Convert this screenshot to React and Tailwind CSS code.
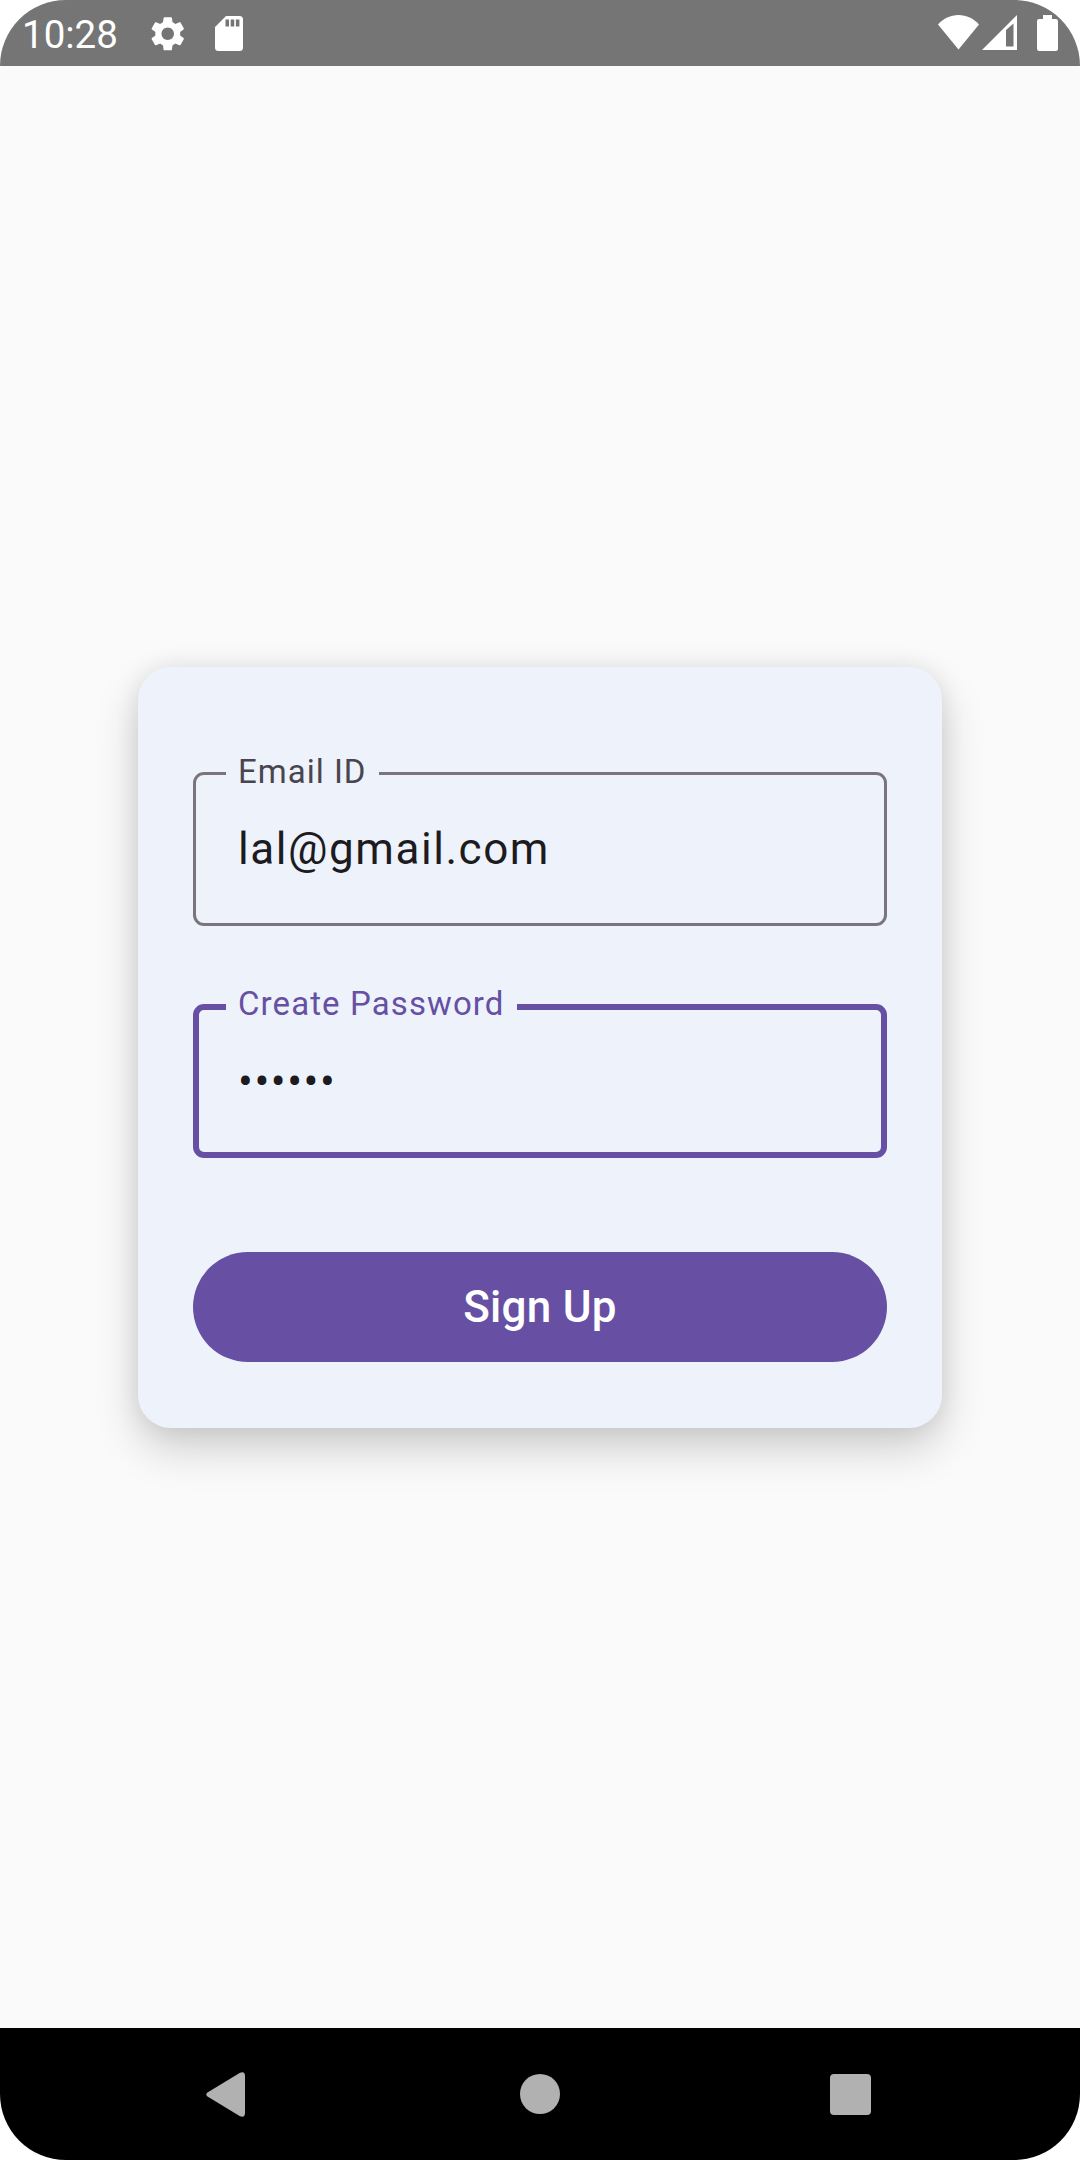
function StatusBar() {
  return (
    <header className="flex h-[66px] items-start justify-between bg-[#757575] text-white">
      <div className="flex items-start">
        <span className="ml-[22px] mt-[12px] w-[98px] whitespace-nowrap text-[38.500px] leading-[46px]">10:28</span>
        <svg className="ml-[27px] mt-[12.500px] size-[41.500px]" viewBox="0 0 24 24" fill="currentColor">
          <path d="M19.14 12.94c.04-.3.06-.61.06-.94 0-.32-.02-.64-.07-.94l2.03-1.58c.18-.14.23-.41.12-.61l-1.92-3.32c-.12-.22-.37-.29-.59-.22l-2.39.96c-.5-.38-1.03-.7-1.62-.94l-.36-2.54c-.04-.24-.24-.41-.48-.41h-3.84c-.24 0-.43.17-.47.41l-.36 2.54c-.59.24-1.13.57-1.62.94l-2.39-.96c-.22-.08-.47 0-.59.22L2.74 8.87c-.12.21-.08.47.12.61l2.03 1.58c-.05.3-.09.63-.09.94s.02.64.07.94l-2.03 1.58c-.18.14-.23.41-.12.61l1.92 3.32c.12.22.37.29.59.22l2.39-.96c.5.38 1.03.7 1.62.94l.36 2.54c.05.24.24.41.48.41h3.84c.24 0 .44-.17.47-.41l.36-2.54c.59-.24 1.13-.56 1.62-.94l2.39.96c.22.08.47 0 .59-.22l1.92-3.32c.12-.22.07-.47-.12-.61l-2.01-1.58zM12 15.6c-1.98 0-3.6-1.62-3.6-3.6s1.62-3.6 3.6-3.6 3.6 1.62 3.6 3.6-1.62 3.6-3.6 3.6z" />
        </svg>
        <svg className="ml-[26.500px] mt-[16px] h-[35px] w-[28px]" viewBox="0 0 28 35" fill="currentColor">
          <path fillRule="evenodd" d="M11 0H24.500A3.500 3.500 0 0 1 28 3.500V31.500A3.500 3.500 0 0 1 24.500 35H3.500A3.500 3.500 0 0 1 0 31.500V11ZM10.500 3.500V10.500H14V3.500ZM15.700 3.500V10.500H19.200V3.500ZM20.900 3.500V10.500H24.400V3.500Z" />
        </svg>
      </div>
      <div className="flex items-start pr-[22px] pt-[15px]">
        <svg className="h-[35px] w-[41px]" viewBox="0 0 41 35" fill="currentColor">
          <path d="M20.500 34.500L0 9.500C5.500 3.500 12.500 0 20.500 0S35.500 3.500 41 9.500Z" />
        </svg>
        <svg className="ml-[3px] h-[35px] w-[35px]" viewBox="0 0 35 35" fill="currentColor">
          <path fillRule="evenodd" d="M0 35L35 0V35ZM24 15V31.500H31.500V8.500Z" />
        </svg>
        <svg className="ml-[20px] h-[36px] w-[21px]" viewBox="0 0 21 36" fill="currentColor">
          <path d="M6 0H15V4H18.800A2.200 2.200 0 0 1 21 6.200V33.800A2.200 2.200 0 0 1 18.800 36H2.200A2.200 2.200 0 0 1 0 33.800V6.200A2.200 2.200 0 0 1 2.200 4H6Z" />
        </svg>
      </div>
    </header>
  );
}

function EmailField() {
  return (
    <div className="relative h-[154px] rounded-[11px] border-[3px] border-[#79747e]">
      <span className="absolute left-[30px] -top-[25px] w-[153px] whitespace-nowrap bg-[#eef3fb] pl-[12px] text-[33px] leading-[44px] tracking-[1px] text-[#49454f]">
        Email ID
      </span>
      <div className="pl-[42px] pt-[41px] text-[44px] leading-[66px] tracking-[1.550px] text-[#1c1b1f]">lal@gmail.com</div>
    </div>
  );
}

function PasswordField() {
  return (
    <div className="relative mt-[78px] h-[154px] rounded-[11px] border-[6px] border-[#6750a4]">
      <span className="absolute left-[27px] -top-[28px] w-[291px] whitespace-nowrap bg-[#eef3fb] pl-[12px] text-[33px] leading-[44px] tracking-[1.1px] text-[#6750a4]">
        Create Password
      </span>
      <div className="pl-[39px] pt-[39px] text-[44px] leading-[66px] tracking-[1.550px] text-[#1c1b1f]">••••••</div>
    </div>
  );
}

function NavigationBar() {
  return (
    <nav className="flex h-[132px] items-start bg-black text-[#b1b1b1]">
      <svg className="ml-[206px] mt-[44px] h-[45px] w-[39px]" viewBox="0 0 39 45" fill="currentColor">
        <path d="M1.500 20.500L34 .8Q39 -1 39 4V41Q39 46 34 44.200L1.500 24.500Q-1 22.500 1.500 20.500Z" />
      </svg>
      <div className="ml-[275px] mt-[46px] size-[40px] rounded-full bg-[#b1b1b1]" />
      <div className="ml-[270px] mt-[46px] size-[41px] rounded-[4px] bg-[#b1b1b1]" />
    </nav>
  );
}

export default function App() {
  return (
    <div className="h-[2160px] w-[1080px] bg-white">
      <div className="flex h-full flex-col overflow-hidden rounded-[66px] bg-[#fafafa] font-['Roboto',sans-serif]">
        <StatusBar />
        <main className="flex flex-1 flex-col items-center pt-[601px]">
          <form className="h-[761px] w-[804px] rounded-[33px] bg-[#eef3fb] px-[55px] pt-[105px] shadow-[0_20px_44px_rgba(0,0,0,0.18),0_0_24px_rgba(0,0,0,0.08)]">
            <EmailField />
            <PasswordField />
            <button type="button" className="mt-[94px] h-[110px] w-full rounded-full bg-[#6750a4] text-[44px] font-medium leading-[66px] tracking-[0.275px] text-white">
              Sign Up
            </button>
          </form>
        </main>
        <NavigationBar />
      </div>
    </div>
  );
}
